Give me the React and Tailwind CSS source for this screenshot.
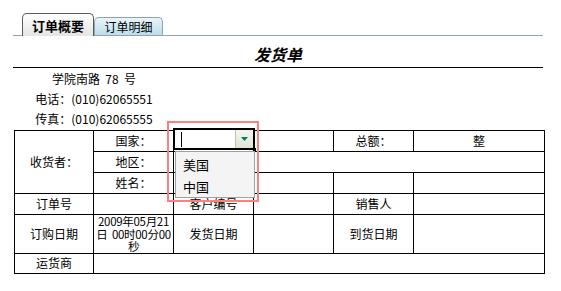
const cell = 'border border-black text-center align-middle p-0'

export default function App() {
  return (
    <div className="relative w-[561px] h-[291px] bg-white text-[12px] leading-none text-black font-['Noto_Sans_CJK_SC','Noto_Sans',sans-serif]">
      <div className="pt-[13px] pl-[13px] w-[543px]">
        {/* tabs */}
        <div className="flex items-end h-[23px] border-b border-[#8ea4b4] pl-[9px]">
          <div className="h-[23px] w-[72px] -mb-px border border-b-0 border-[#5a5a5a] rounded-t-[5px] bg-gradient-to-b from-white to-[#e4e4e4] font-bold text-[13px] flex items-center justify-center">
            订单概要
          </div>
          <div className="h-[18px] w-[69px] border border-b-0 border-[#8ea4b4] rounded-t-[5px] bg-gradient-to-b from-[#eaf5f9] to-[#bcdde9] flex items-center justify-center pt-px">
            订单明细
          </div>
        </div>

        {/* title */}
        <div className="h-[32px] border-b border-black flex items-center justify-center pt-[4px]">
          <span className="text-[16px] font-bold italic">发货单</span>
        </div>

        {/* address */}
        <div className="w-[162px] text-center leading-[20px] pt-px">
          <div>学院南路&nbsp; 78&nbsp; 号</div>
          <div>电话：(010)62065551</div>
          <div>传真：(010)62065555</div>
        </div>

        {/* order table */}
        <table className="mt-px ml-px w-[530px] table-fixed border-collapse border border-black">
          <colgroup>
            <col className="w-[79px]" />
            <col className="w-[80px]" />
            <col className="w-[80px]" />
            <col className="w-[80px]" />
            <col className="w-[80px]" />
            <col className="w-[131px]" />
          </colgroup>
          <tbody>
            <tr className="h-[21px]">
              <td rowSpan={3} className={cell}>收货者：</td>
              <td className={cell}>国家：</td>
              <td colSpan={2} className={cell}></td>
              <td className={cell}>总额：</td>
              <td className={cell}>整</td>
            </tr>
            <tr className="h-[21px]">
              <td className={cell}>地区：</td>
              <td colSpan={4} className={cell}></td>
            </tr>
            <tr className="h-[21px]">
              <td className={cell}>姓名：</td>
              <td colSpan={2} className={cell}></td>
              <td className={cell}></td>
              <td className={cell}></td>
            </tr>
            <tr className="h-[21px]">
              <td className={cell}>订单号</td>
              <td className={cell}></td>
              <td className={cell}>客户编号</td>
              <td className={cell}></td>
              <td className={cell}>销售人</td>
              <td className={cell}></td>
            </tr>
            <tr className="h-[38px]">
              <td className={cell}>订购日期</td>
              <td className={cell}>
                <div className="text-[11.5px] leading-[12.5px] whitespace-nowrap tracking-[-0.3px]">
                  2009年05月21<br />日&nbsp; 00时00分00<br />秒
                </div>
              </td>
              <td className={cell}>发货日期</td>
              <td className={cell}></td>
              <td className={cell}>到货日期</td>
              <td className={cell}></td>
            </tr>
            <tr className="h-[20px]">
              <td className={cell}>运货商</td>
              <td colSpan={5} className={cell}></td>
            </tr>
          </tbody>
        </table>
      </div>

      {/* open country select with its list */}
      <div className="absolute left-[173px] top-[128px] w-[82px] h-[22px] border-2 border-black bg-white flex">
        <div className="flex-1 flex items-center pl-[6px]">
          <span className="block w-px h-[15px] bg-black" />
        </div>
        <div className="w-[18px] h-full border-l border-[#b8c4b0] bg-gradient-to-b from-[#f4f6ee] to-[#dfe5d5] flex items-center justify-center">
          <svg width="7" height="4" viewBox="0 0 7 4">
            <path d="M0 0h7L3.5 4z" fill="#007a6a" />
          </svg>
        </div>
      </div>
      <div className="absolute left-[253px] top-[148px] w-[3px] h-[3px] bg-black" />
      <div className="absolute left-[175px] top-[151px] w-[80px] h-[47px] border border-[#a0a0a0] bg-[#f4f4f4] text-[13px] pl-[7px]">
        <div className="h-[22px] flex items-center pt-[2px]">美国</div>
        <div className="h-[22px] flex items-center pt-[2px]">中国</div>
      </div>
      <div className="absolute left-[167px] top-[121px] w-[92px] h-[81px] border-2 border-[#ff7f7f]" />
    </div>
  )
}
